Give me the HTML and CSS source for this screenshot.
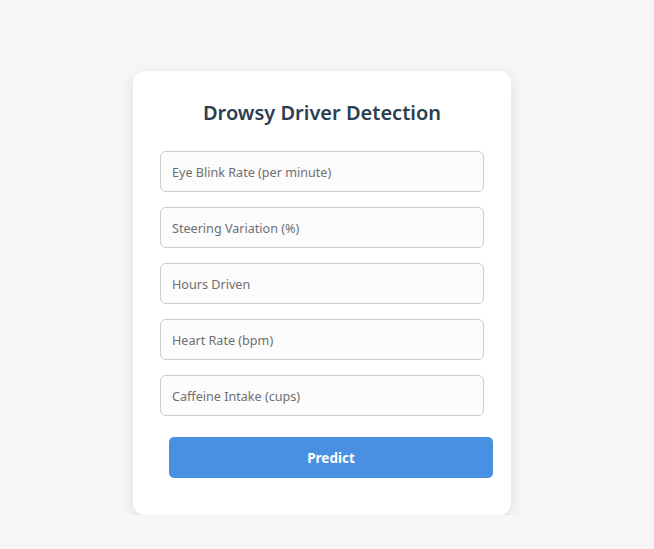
FILE: index.html
```html
<!DOCTYPE html>
<html>
<head>
<meta charset="utf-8">
<link rel="stylesheet" href="styles.css">
</head>
<body>
<div class="card">
  <h2 class="title">Drowsy Driver Detection</h2>
  <form class="form">
    <input class="field" type="text" placeholder="Eye Blink Rate (per minute)">
    <input class="field" type="text" placeholder="Steering Variation (%)">
    <input class="field" type="text" placeholder="Hours Driven">
    <input class="field" type="text" placeholder="Heart Rate (bpm)">
    <input class="field" type="text" placeholder="Caffeine Intake (cups)">
    <button class="btn" type="button">Predict</button>
  </form>
</div>
</body>
</html>
```
FILE: styles.css
```css
html, body {
  margin: 0;
  background: #f6f6f6;
}
body {
  padding: 71px 0 0 133px;
  font-family: "Noto Sans", "Open Sans", sans-serif;
}
.card {
  box-sizing: border-box;
  width: 378px;
  height: 444px;
  background: #ffffff;
  border-radius: 12px;
  box-shadow: 0 4px 14px rgba(0, 0, 0, 0.1);
  padding: 28px 27px 0 27px;
}
.title {
  margin: 0;
  text-align: center;
  font-size: 20px;
  font-weight: 600;
  color: #2c3e50;
  line-height: 28px;
}
.form {
  display: flex;
  flex-direction: column;
  gap: 15px;
  margin-top: 24px;
}
.field {
  box-sizing: border-box;
  width: 324px;
  height: 41px;
  margin: 0;
  padding: 2px 11px 0 11px;
  border: 1px solid #cccccc;
  border-radius: 6px;
  background: #fcfcfc;
  font-family: inherit;
  font-size: 12.6px;
  color: #333;
}
.field::placeholder {
  color: #6f6f6f;
}
.btn {
  box-sizing: border-box;
  width: 324px;
  height: 41px;
  margin: 6px 0 0 9px;
  padding-top: 2px;
  border: none;
  border-radius: 5px;
  background: #4a90e2;
  color: #ffffff;
  font-family: inherit;
  font-size: 13.5px;
  font-weight: 700;
}
```
